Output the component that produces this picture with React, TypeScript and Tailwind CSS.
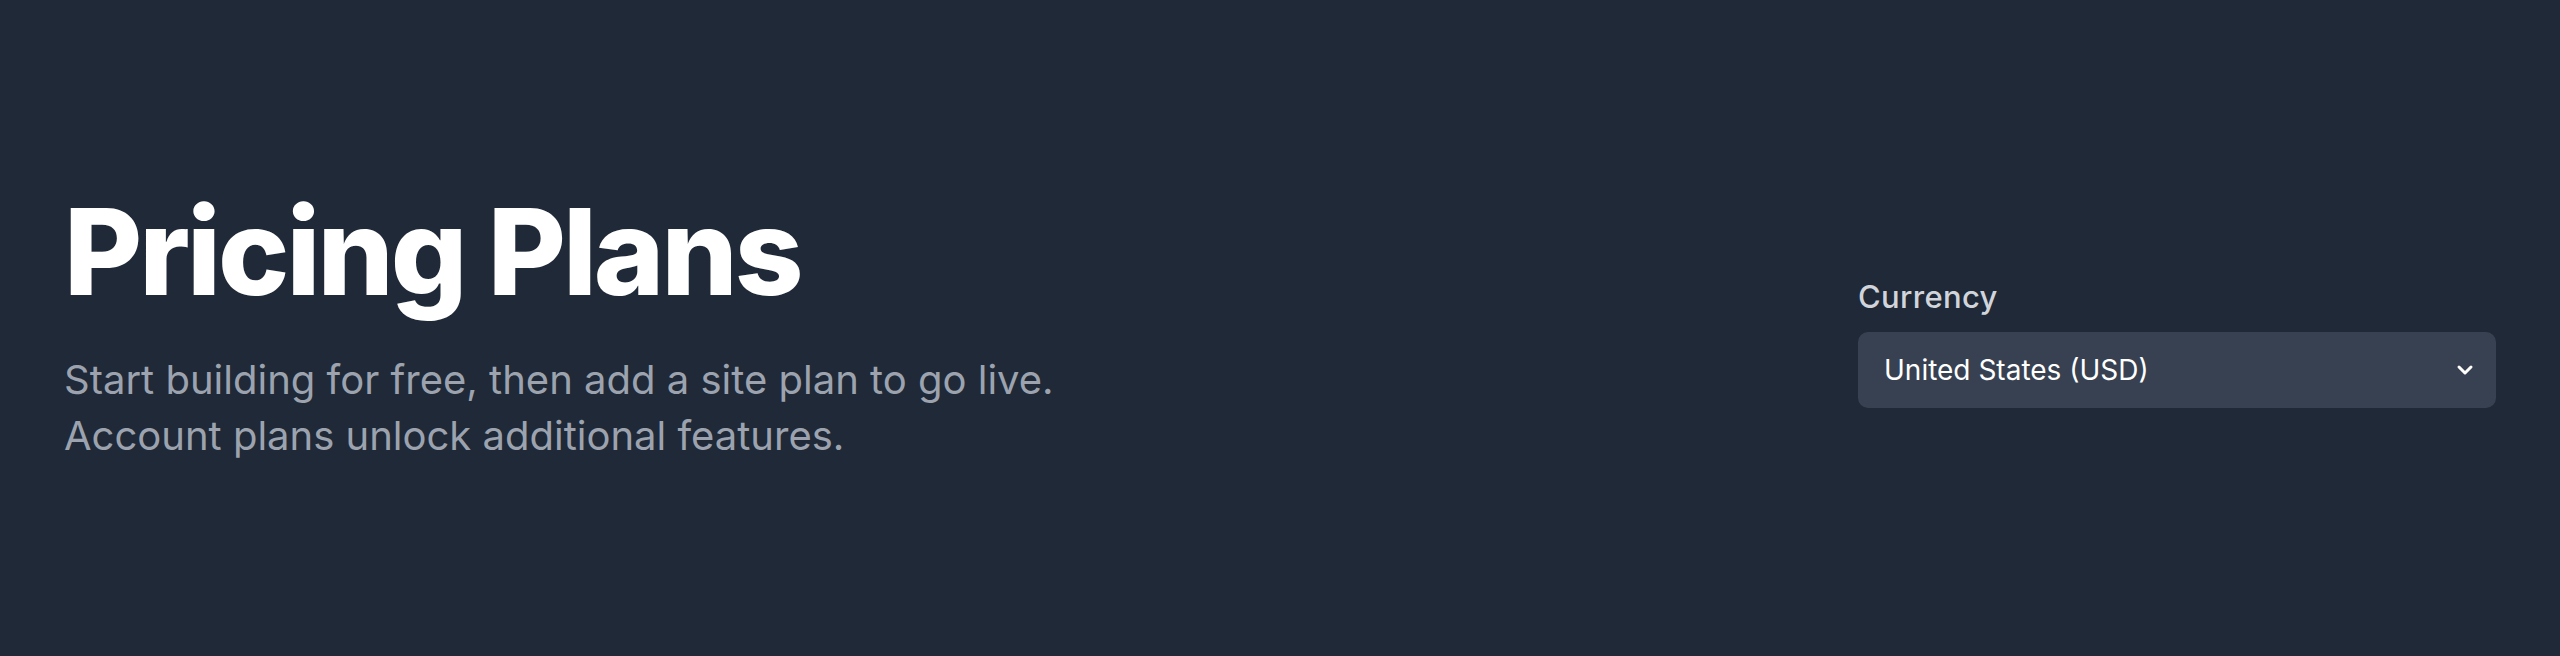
import { ChevronDown } from 'lucide-react';

export default function App() {
  return (
    <div className="flex h-[656px] w-full items-center bg-[#1f2937] px-16 font-['Inter',sans-serif]">
      <div className="flex w-full items-start justify-between">
        <div className="min-w-0">
          <h1 className="text-[120px] font-extrabold leading-none tracking-[-0.025em] text-white">
            Pricing Plans
          </h1>
          <p className="mt-10 text-[40px] leading-[56px] text-[#9ca3af]">
            Start building for free, then add a site plan to go live.
            <br />
            Account plans unlock additional features.
          </p>
        </div>
        <div className="mt-[85px] w-[638px] shrink-0">
          <label className="block text-[31px] font-medium leading-10 tracking-[0.01em] text-[#d1d5db]">Currency</label>
          <div className="mt-[15px] flex h-[76px] w-full items-center justify-between rounded-[10px] bg-[#374151] pl-[26px] pr-[19px] text-[28px] text-white">
            <span>United States (USD)</span>
            <ChevronDown className="h-6 w-6 text-white" strokeWidth={3} />
          </div>
        </div>
      </div>
    </div>
  );
}
